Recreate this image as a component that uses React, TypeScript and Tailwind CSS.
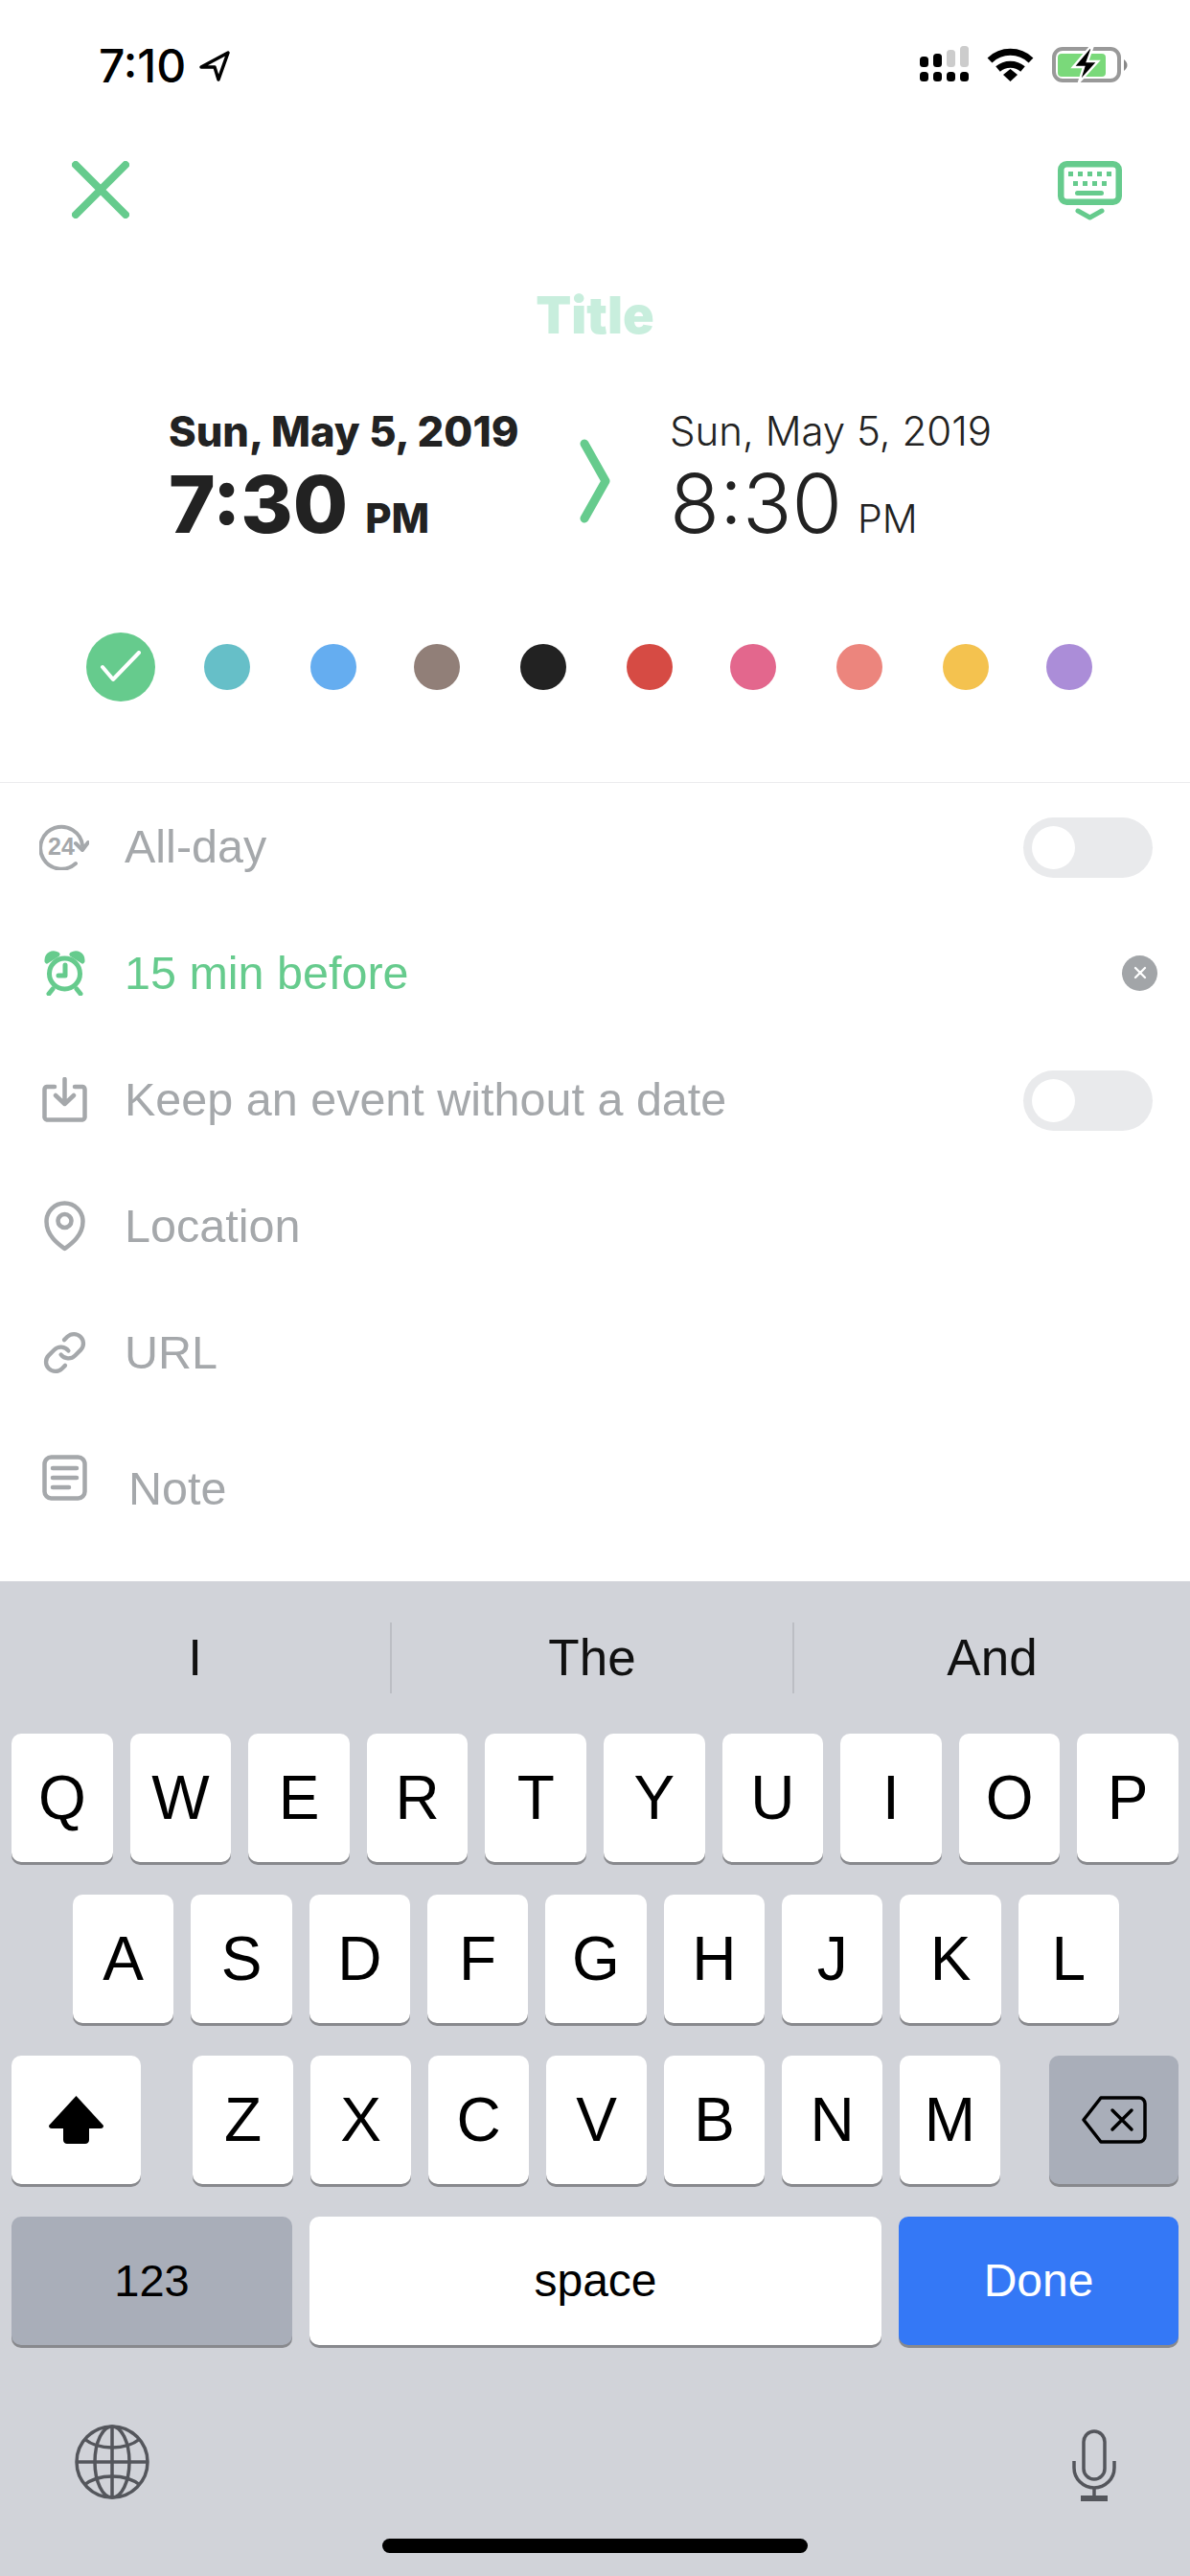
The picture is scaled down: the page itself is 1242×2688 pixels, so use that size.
import type { ReactNode } from 'react';

const GRAY = '#a5a8ab';
const GREEN = '#66cb8d';

function CloseIcon() {
  return (
    <svg width="60" height="60" viewBox="0 0 60 60" fill="none" stroke={GREEN} strokeWidth="8" strokeLinecap="round">
      <path d="M4 4L56 56M56 4L4 56" />
    </svg>
  );
}

function KeyboardIcon() {
  return (
    <svg width="67" height="63" viewBox="0 0 67 63" fill="none">
      <rect x="3.250" y="3.250" width="60.500" height="39.500" rx="6" stroke={GREEN} strokeWidth="6.500" />
      <g fill={GREEN}>
        <rect x="11" y="11" width="5" height="5" />
        <rect x="21" y="11" width="5" height="5" />
        <rect x="31" y="11" width="5" height="5" />
        <rect x="41" y="11" width="5" height="5" />
        <rect x="51" y="11" width="5" height="5" />
        <rect x="16" y="21" width="5" height="5" />
        <rect x="26" y="21" width="5" height="5" />
        <rect x="36" y="21" width="5" height="5" />
        <rect x="46" y="21" width="5" height="5" />
        <rect x="18" y="31" width="30" height="5" rx="2.500" />
      </g>
      <path d="M21 52L33.500 59L46 52" stroke={GREEN} strokeWidth="5" strokeLinecap="round" strokeLinejoin="round" />
    </svg>
  );
}

function StatusIcons() {
  return (
    <div className="flex items-start">
      <svg width="51" height="37" viewBox="0 0 51 37" className="mr-[19px]">
        <rect x="0" y="11" width="9" height="11" rx="3.500" />
        <rect x="14" y="8" width="9" height="14" rx="3.500" />
        <rect x="28" y="4" width="9" height="18" rx="3.500" fill="#cccccc" />
        <rect x="42" y="0" width="9" height="22" rx="3.500" fill="#cccccc" />
        <rect x="0" y="27" width="9" height="10" rx="3.500" />
        <rect x="14" y="27" width="9" height="10" rx="3.500" />
        <rect x="28" y="27" width="9" height="10" rx="3.500" />
        <rect x="42" y="27" width="9" height="10" rx="3.500" />
      </svg>
      <svg width="49" height="37" viewBox="0 0 49 37" fill="none" stroke="#000" strokeWidth="7" className="mt-[1px] mr-[19px]">
        <path d="M3 14A31 31 0 0 1 46 14" />
        <path d="M11.500 23A20 20 0 0 1 37.500 23" />
        <path d="M17 29L24.500 23L32 29L24.500 36Z" fill="#000" stroke="none" />
      </svg>
      <svg width="79" height="38" viewBox="0 0 79 38" fill="none" className="mt-[1px]">
        <rect x="2" y="2" width="68" height="33" rx="9" stroke="#999999" strokeWidth="4" />
        <rect x="6" y="7" width="50" height="24" rx="4" fill="#7ad97a" />
        <path d="M75 13C77.500 15 78.500 17 78.500 19C78.500 21 77.500 23 75 25Z" fill="#888888" />
        <path d="M39 1L22 21H33L28 37L48 15H37L42 1Z" fill="#000" stroke="#fff" strokeWidth="2.500" />
      </svg>
    </div>
  );
}

function Icon24() {
  return (
    <svg width="52" height="49" viewBox="0 0 52 49" fill="none" stroke={GRAY} strokeWidth="4" strokeLinecap="round" strokeLinejoin="round">
      <path d="M38 42A22 22 0 1 1 45 23" />
      <path d="M38 21L45 28L51 20" />
      <text x="23" y="33" textAnchor="middle" fontSize="25" fontWeight="700" fontFamily="Liberation Sans" fill={GRAY} stroke="none">
        24
      </text>
    </svg>
  );
}

function AlarmIcon() {
  return (
    <svg width="43" height="47" viewBox="0 0 43 47" fill="none" stroke={GREEN} strokeWidth="5" strokeLinecap="round" strokeLinejoin="round">
      <circle cx="21.500" cy="24" r="16" />
      <path d="M22 15V26H15" />
      <path d="M3 11C2.500 4 9 1 14 4Z" />
      <path d="M40 11C40.500 4 34 1 29 4Z" />
      <path d="M9 40L5 45M34 40L38 45" />
    </svg>
  );
}

function TrayIcon() {
  return (
    <svg width="47" height="47" viewBox="0 0 47 47" fill="none" stroke={GRAY} strokeWidth="4.500" strokeLinecap="round" strokeLinejoin="round">
      <path d="M13 10H5A3 3 0 0 0 2.500 13V41A3 3 0 0 0 5 44.500H42A3 3 0 0 0 44.500 41V13A3 3 0 0 0 42 10H34" />
      <path d="M23.500 2V27M14 19L23.500 28L33 19" />
    </svg>
  );
}

function PinIcon() {
  return (
    <svg width="43" height="53" viewBox="0 0 43 53" fill="none" stroke={GRAY} strokeWidth="4.500" strokeLinejoin="round">
      <path d="M21.500 50C16 46 2.500 37 2.500 21.500A19 19 0 0 1 40.500 21.500C40.500 37 27 46 21.500 50Z" />
      <circle cx="21.500" cy="21" r="7" />
    </svg>
  );
}

function LinkIcon() {
  return (
    <svg width="47" height="47" viewBox="0 0 24 24" fill="none" stroke={GRAY} strokeWidth="2.200" strokeLinecap="round" strokeLinejoin="round">
      <path d="M10 13a5 5 0 0 0 7.540.54l3-3a5 5 0 0 0-7.070-7.070l-1.720 1.710" />
      <path d="M14 11a5 5 0 0 0-7.540-.54l-3 3a5 5 0 0 0 7.070 7.070l1.710-1.710" />
    </svg>
  );
}

function NoteIcon() {
  return (
    <svg width="47" height="48" viewBox="0 0 47 48" fill="none" stroke={GRAY} strokeWidth="4.500" strokeLinecap="round">
      <rect x="2.500" y="2.500" width="42" height="43" rx="7" />
      <path d="M11 14H36M11 24H36M11 34H28" />
    </svg>
  );
}

function Toggle() {
  return (
    <div className="flex items-center w-[135px] h-[63px] rounded-full bg-[#e9eaec] pl-[9px] mt-[2px]">
      <div className="w-[45px] h-[45px] rounded-full bg-white" />
    </div>
  );
}

function Row({ icon, label, color, right }: { icon: ReactNode; label: string; color?: string; right?: ReactNode }) {
  return (
    <div className="flex items-center h-[132px] pl-[41px] pr-[39px]">
      <div className="flex items-center justify-center w-[52px] mr-[37px]">{icon}</div>
      <span className={`text-[48.500px] flex-1 ${color ?? 'text-[#a5a8ab]'}`}>{label}</span>
      {right}
    </div>
  );
}

function Key({ children, className }: { children: ReactNode; className?: string }) {
  return (
    <div className={`flex items-center justify-center h-[134px] rounded-[10px] shadow-[0_3px_0_#88898d] ${className ?? 'bg-white text-[64px] text-black'}`}>
      {children}
    </div>
  );
}

export default function App() {
  return (
    <div className="flex flex-col w-[1242px] h-[2688px] bg-white font-['Liberation_Sans',sans-serif] overflow-hidden">
      {/* Status bar */}
      <div className="flex justify-between items-start h-[136px] pt-[48px] pl-[103px] pr-[65px]">
        <div className="flex items-center">
          <span className="text-[48px] leading-[42px] font-['Inter',sans-serif] font-medium text-black">7:10</span>
          <svg width="32" height="32" viewBox="0 0 32 32" fill="none" stroke="#000" strokeWidth="3.500" strokeLinejoin="round" className="ml-[14px]">
            <path d="M2 17L30 2L20 30L16 17Z" />
          </svg>
        </div>
        <StatusIcons />
      </div>

      {/* Close + keyboard */}
      <div className="flex justify-between items-start h-[154px] pt-[32px] pl-[75px] pr-[71px]">
        <CloseIcon />
        <KeyboardIcon />
      </div>

      {/* Title */}
      <div className="flex items-center justify-center h-[76px] text-[54px] font-['Inter',sans-serif] font-black text-[#c8eedd]">
        Title
      </div>

      {/* Dates */}
      <div className="flex items-center h-[152px] mt-[60px] pl-[176px]">
        <div className="flex flex-col w-[428px] pt-[14px] text-[#222222] font-['Inter',sans-serif] font-extrabold">
          <span className="text-[43.500px] leading-[48px] whitespace-nowrap">Sun, May 5, 2019</span>
          <div className="flex items-baseline leading-[104px]">
            <span className="text-[83px]">7:30</span>
            <span className="text-[42px] ml-[18px]">PM</span>
          </div>
        </div>
        <svg width="34" height="88" viewBox="0 0 34 88" fill="none" stroke={GREEN} strokeWidth="9" strokeLinecap="round" strokeLinejoin="round">
          <path d="M6 5L28 44L6 83" />
        </svg>
        <div className="flex flex-col ml-[61px] pt-[14px] text-[#222222] font-['Inter',sans-serif] font-light">
          <span className="text-[42px] leading-[48px] whitespace-nowrap">Sun, May 5, 2019</span>
          <div className="flex items-baseline leading-[104px]">
            <span className="text-[85px]">8:30</span>
            <span className="text-[41px] ml-[16px]">PM</span>
          </div>
        </div>
      </div>

      {/* Colours */}
      <div className="flex items-center h-[72px] mt-[82px] pl-[90px]">
        <div className="flex items-center justify-center w-[72px] h-[72px] rounded-full bg-[#66cb8d]">
          <svg width="44" height="34" viewBox="0 0 44 34" fill="none" stroke="#fff" strokeWidth="4" strokeLinecap="round" strokeLinejoin="round">
            <path d="M3 17L14 30L41 2" />
          </svg>
        </div>
        <div className="w-[48px] h-[48px] rounded-full ml-[51px] bg-[#66bfc8]" />
        <div className="w-[48px] h-[48px] rounded-full ml-[63px] bg-[#65adf0]" />
        <div className="w-[48px] h-[48px] rounded-full ml-[60px] bg-[#917f78]" />
        <div className="w-[48px] h-[48px] rounded-full ml-[63px] bg-[#222222]" />
        <div className="w-[48px] h-[48px] rounded-full ml-[63px] bg-[#d64b44]" />
        <div className="w-[48px] h-[48px] rounded-full ml-[60px] bg-[#e3678d]" />
        <div className="w-[48px] h-[48px] rounded-full ml-[63px] bg-[#ec857d]" />
        <div className="w-[48px] h-[48px] rounded-full ml-[63px] bg-[#f4c24f]" />
        <div className="w-[48px] h-[48px] rounded-full ml-[60px] bg-[#ab8dd8]" />
      </div>

      {/* Options */}
      <div className="mt-[84px] border-t border-[#ececee]">
        <Row icon={<Icon24 />} label="All-day" right={<Toggle />} />
        <Row
          icon={<AlarmIcon />}
          label="15 min before"
          color="text-[#66cb8d]"
          right={
            <div className="flex items-center justify-center w-[37px] h-[37px] rounded-full bg-[#a2a5a8] -mr-[5px]">
              <svg width="14" height="14" viewBox="0 0 14 14" stroke="#fff" strokeWidth="2.200" strokeLinecap="round">
                <path d="M2 2L12 12M12 2L2 12" />
              </svg>
            </div>
          }
        />
        <Row icon={<TrayIcon />} label="Keep an event without a date" right={<Toggle />} />
        <Row icon={<PinIcon />} label="Location" />
        <Row icon={<LinkIcon />} label="URL" />
        <div className="flex items-start h-[173px] pt-[41px] pl-[44px]">
          <NoteIcon />
          <span className="text-[48.500px] leading-[72px] text-[#a5a8ab] ml-[43px] -mt-[1px]">Note</span>
        </div>
      </div>

      {/* Keyboard */}
      <div className="flex flex-col flex-1 bg-[#d1d3d9]">
        <div className="flex items-center h-[159px] text-[53px] text-[#111111]">
          <div className="flex items-center justify-center w-[409px] h-[74px] border-r-2 border-[#bcbec4]">I</div>
          <div className="flex items-center justify-center w-[420px] h-[74px] border-r-2 border-[#bcbec4]">The</div>
          <div className="flex items-center justify-center flex-1 h-[74px]">And</div>
        </div>

        <div className="grid grid-cols-10 gap-[18px] px-[12px]">
          {'QWERTYUIOP'.split('').map((k) => (
            <Key key={k}>{k}</Key>
          ))}
        </div>

        <div className="grid grid-cols-9 gap-[18px] pl-[76px] pr-[74px] mt-[34px]">
          {'ASDFGHJKL'.split('').map((k) => (
            <Key key={k}>{k}</Key>
          ))}
        </div>

        <div className="flex mt-[34px] px-[12px]">
          <Key className="bg-white w-[135px] mr-[54px]">
            <svg width="57" height="50" viewBox="0 0 57 50">
              <path d="M28.500 0L57 31C57 33 56 34 54 34H42V46C42 48.500 40 50 38 50H19C17 50 15 48.500 15 46V34H3C1 34 0 33 0 31Z" fill="#000" />
            </svg>
          </Key>
          <div className="grid grid-cols-7 gap-[18px] w-[843px]">
            {'ZXCVBNM'.split('').map((k) => (
              <Key key={k}>{k}</Key>
            ))}
          </div>
          <Key className="bg-[#a9aeb9] w-[135px] ml-[51px]">
            <svg width="68" height="50" viewBox="0 0 68 50" fill="none" stroke="#000" strokeWidth="3.500" strokeLinejoin="round" strokeLinecap="round">
              <path d="M20 2H60A6 6 0 0 1 66 8V42A6 6 0 0 1 60 48H20L2 25Z" />
              <path d="M32 15L52 35M52 15L32 35" />
            </svg>
          </Key>
        </div>

        <div className="flex gap-[18px] mt-[34px] px-[12px]">
          <Key className="bg-[#a9aeb9] w-[293px] text-[47px] text-black">123</Key>
          <Key className="bg-white w-[597px] text-[48px] text-black">space</Key>
          <Key className="bg-[#3478f6] w-[292px] text-[48px] text-white">Done</Key>
        </div>

        <div className="flex justify-between items-start h-[202px] pt-[83px] pl-[78px] pr-[77px]">
          <svg width="78" height="78" viewBox="0 0 78 78" fill="none" stroke="#54565c" strokeWidth="3.500">
            <circle cx="39" cy="39" r="37" />
            <ellipse cx="39" cy="39" rx="18" ry="37" />
            <path d="M39 2V76M2 39H76" />
            <path d="M10 15C25 27 53 27 68 15M10 63C25 51 53 51 68 63" />
          </svg>
          <svg width="46" height="75" viewBox="0 0 46 75" fill="none" stroke="#54565c" strokeWidth="3.500" className="mt-[5px]">
            <rect x="12" y="2" width="22" height="50" rx="11" />
            <path d="M2 33V40A21 21 0 0 0 44 40V33" strokeWidth="3.500" />
            <path d="M23 61V70" />
            <path d="M9 72H37" strokeWidth="6" />
          </svg>
        </div>
        <div className="w-[444px] h-[15px] rounded-full bg-black ml-[399px]" />
      </div>
    </div>
  );
}
